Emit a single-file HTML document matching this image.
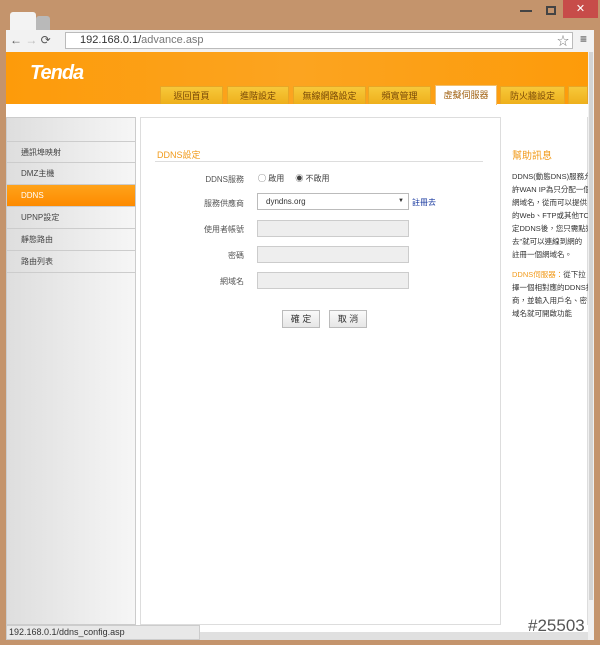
<!DOCTYPE html>
<html><head><meta charset="utf-8"><style>
*{margin:0;padding:0;box-sizing:border-box}
body{width:600px;height:645px;background:#c4946c;font-family:"Liberation Sans","Noto Sans CJK TC",sans-serif;font-size:8px;color:#333;position:relative;overflow:hidden}
.abs{position:absolute}
.tab{position:absolute;top:86px;height:18px;background:linear-gradient(#f7c83a,#eeb01c);border:1px solid #e7a626;border-bottom:none;color:#7a4a08;text-align:center;line-height:18px;font-size:9px}
.side div{height:22px;border-bottom:1px solid #ccc;padding-left:14px;line-height:22px;font-size:8px;color:#444}
.lbl{position:absolute;width:100px;text-align:right;font-size:8px;color:#555}
.inp{position:absolute;left:257px;width:152px;height:17px;background:#eee;border:1px solid #ccc}
</style></head><body>
<div class="abs" style="left:10px;top:12px;width:26px;height:20px;background:#f3f3f3;border-radius:3px 3px 0 0"></div>
<div class="abs" style="left:36px;top:16px;width:14px;height:16px;background:#b9b9b9;border-radius:3px 3px 0 0"></div>
<div class="abs" style="left:520px;top:10px;width:12px;height:2px;background:#444"></div>
<div class="abs" style="left:546px;top:6px;width:10px;height:9px;border:2px solid #444"></div>
<div class="abs" style="left:563px;top:0;width:35px;height:18px;background:#c74c49;color:#fff;text-align:center;font-size:11px;line-height:18px">✕</div>
<div class="abs" style="left:6px;top:30px;width:588px;height:22px;background:#f2f2f2"></div>
<div class="abs" style="left:10px;top:33px;font-size:12px;color:#555">← <span style="color:#bbb">→</span> ⟳</div>
<div class="abs" style="left:65px;top:32px;width:508px;height:17px;background:#fff;border:1px solid #bbb;font-size:11px;line-height:15px;padding-left:14px;color:#333">192.168.0.1/<span style="color:#777">advance.asp</span></div>
<div class="abs" style="left:557px;top:32px;font-size:12px;color:#777">☆</div>
<div class="abs" style="left:580px;top:32px;font-size:12px;color:#333">≡</div>
<div class="abs" style="left:6px;top:52px;width:582px;height:588px;background:#fff"></div>
<div class="abs" style="left:6px;top:52px;width:582px;height:52px;background:linear-gradient(90deg,#fd9b0a,#fca420 50%,#fd9b0a)"></div>
<div class="abs" style="left:30px;top:62px;font-size:20px;font-weight:bold;font-style:italic;color:#fff;letter-spacing:-1px">Tenda</div>
<div class="tab" style="left:160px;width:63px">返回首頁</div>
<div class="tab" style="left:227px;width:62px">進階設定</div>
<div class="tab" style="left:293px;width:73px">無線網路設定</div>
<div class="tab" style="left:368px;width:63px">頻寬管理</div>
<div class="tab" style="left:435px;width:62px;background:#fff;color:#a06010;top:85px;height:20px;border-color:#f1c070">虛擬伺服器</div>
<div class="tab" style="left:500px;width:65px">防火牆設定</div>
<div class="tab" style="left:568px;width:20px"></div>
<div class="abs side" style="left:6px;top:117px;width:130px;height:508px;background:linear-gradient(90deg,#dedede,#f6f6f6);border:1px solid #ccc;padding-top:23px">
<div style="border-top:1px solid #ccc">通訊埠映射</div>
<div>DMZ主機</div>
<div style="background:linear-gradient(#ffa31a,#fd8a00);color:#fff">DDNS</div>
<div>UPNP設定</div>
<div>靜態路由</div>
<div>路由列表</div>
</div>
<div class="abs" style="left:140px;top:117px;width:361px;height:508px;border:1px solid #ddd"></div>
<div class="abs" style="left:157px;top:148px;color:#f19a1a;font-size:9px">DDNS設定</div>
<div class="abs" style="left:155px;top:161px;width:328px;border-top:1px solid #ddd"></div>
<div class="lbl" style="left:144px;top:174px">DDNS服務</div>
<div class="abs" style="left:258px;top:173px;font-size:8px;color:#444">◯ 啟用 &nbsp;&nbsp;&nbsp; ◉ 不啟用</div>
<div class="lbl" style="left:144px;top:198px">服務供應商</div>
<div class="abs" style="left:257px;top:193px;width:152px;height:17px;border:1px solid #bbb;background:#fff;font-size:8px;line-height:15px;padding-left:8px">dyndns.org<span style="position:absolute;right:4px;font-size:6px">▼</span></div>
<div class="abs" style="left:412px;top:197px;color:#1a3aa0;font-size:8px">註冊去</div>
<div class="lbl" style="left:144px;top:224px">使用者帳號</div><div class="inp" style="top:220px"></div>
<div class="lbl" style="left:144px;top:250px">密碼</div><div class="inp" style="top:246px"></div>
<div class="lbl" style="left:144px;top:276px">網域名</div><div class="inp" style="top:272px"></div>
<div class="abs" style="left:282px;top:310px;width:38px;height:18px;border:1px solid #bbb;background:linear-gradient(#fafafa,#e6e6e6);text-align:center;line-height:16px;font-size:9px">確 定</div>
<div class="abs" style="left:329px;top:310px;width:38px;height:18px;border:1px solid #bbb;background:linear-gradient(#fafafa,#e6e6e6);text-align:center;line-height:16px;font-size:9px">取 消</div>
<div class="abs" style="left:501px;top:117px;width:87px;height:508px;border-right:1px solid #ddd"></div>
<div class="abs" style="left:512px;top:147px;color:#f19a1a;font-size:10px">幫助訊息</div>
<div class="abs" style="left:512px;top:170px;width:76px;height:90px;overflow:hidden;font-size:7.5px;line-height:13px;color:#333;white-space:nowrap">DDNS(動態DNS)服務允<br>許WAN IP為只分配一個<br>網域名，從而可以提供<br>的Web、FTP或其他TCP<br>定DDNS後，您只需點選<br>去"就可以連線到網的<br>註冊一個網域名。</div>
<div class="abs" style="left:512px;top:268px;width:76px;height:52px;overflow:hidden;font-size:7.5px;line-height:13px;color:#333;white-space:nowrap"><span style="color:#f19a1a">DDNS伺服器：</span>從下拉<br>擇一個相對應的DDNS提<br>商，並輸入用戶名、密<br>域名就可開啟功能</div>
<div class="abs" style="left:588px;top:52px;width:6px;height:588px;background:#f0f0f0"></div>
<div class="abs" style="left:589px;top:52px;width:4px;height:548px;background:#d4d4d4"></div>
<div class="abs" style="left:6px;top:625px;width:194px;height:15px;background:#e8e8e8;border:1px solid #ccc;font-size:9px;line-height:13px;padding-left:2px;color:#333">192.168.0.1/ddns_config.asp</div>
<div class="abs" style="left:200px;top:632px;width:388px;height:8px;background:#e0e0e0"></div>
<div class="abs" style="left:528px;top:616px;font-size:17px;color:#555">#25503</div>
</body></html>
